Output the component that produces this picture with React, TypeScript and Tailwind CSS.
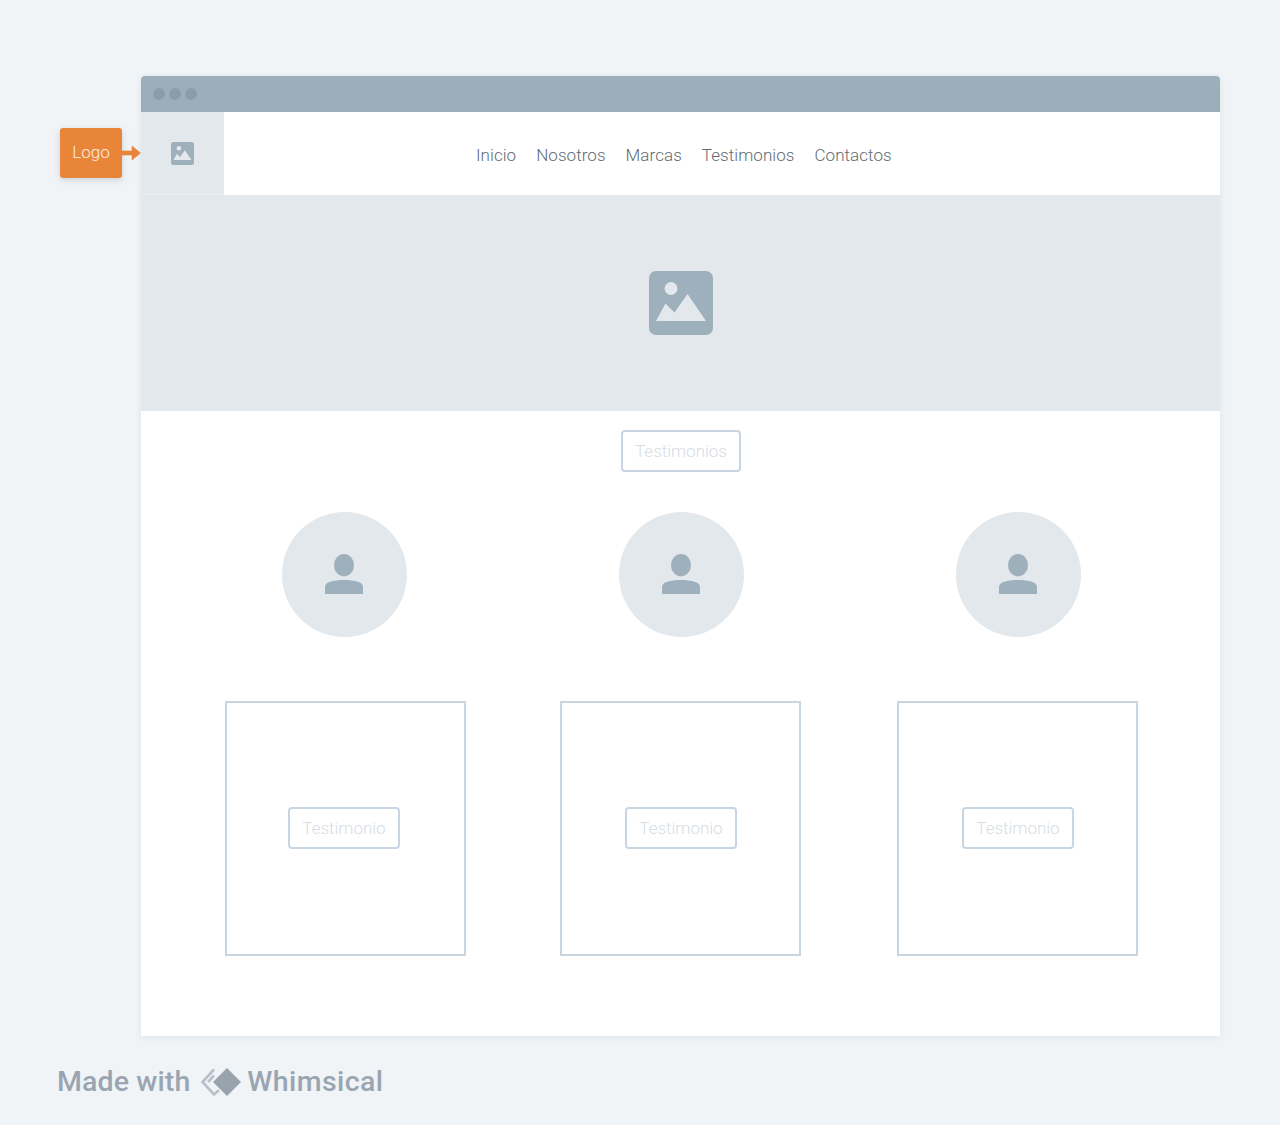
function ImageIcon({ className }: { className: string }) {
  return (
    <svg viewBox="0 0 64 64" className={className}>
      <rect width="64" height="64" rx="7" fill="#9fb0bd" />
      <circle cx="22" cy="17.5" r="6.4" fill="#e3e8ec" />
      <path d="M7 50 L16.5 32.5 L25.5 41.5 L38.5 23 L57 50 Z" fill="#e3e8ec" />
    </svg>
  );
}

function UserIcon() {
  return (
    <svg viewBox="0 0 38 40" className="w-[38px] h-[40px] mr-[1px] mb-[2px]">
      <ellipse cx="19" cy="11.2" rx="10" ry="11.2" fill="#9fb0bd" />
      <path d="M0 40 V33 C0 28 8 26 19 26 C30 26 38 28 38 33 V40 Z" fill="#9fb0bd" />
    </svg>
  );
}

function WhimsicalLogo() {
  return (
    <svg viewBox="0 0 42 30" className="w-[42px] h-[30px]">
      <path d="M14 2.5 L2.5 15 L14 27.5 L19 23" fill="none" stroke="#b7bfc8" strokeWidth="2.6" />
      <path d="M8 15 L14 8.5" fill="none" stroke="#b7bfc8" strokeWidth="2.6" />
      <path d="M27 1 L41 15 L27 29 L13 15 Z" fill="#98a3ae" />
    </svg>
  );
}

function Label({ text, className }: { text: string; className: string }) {
  return (
    <div
      className={`flex items-center justify-center h-[42px] pt-[2px] bg-white border-2 border-[#c9d5e0] rounded-[4px] text-[#d6dde4] text-[17px] font-light ${className}`}
    >
      {text}
    </div>
  );
}

const navItems = ["Inicio", "Nosotros", "Marcas", "Testimonios", "Contactos"];

const cards = [
  { margin: "", offset: "mr-[3px] mb-[2px]" },
  { margin: "ml-[94px]", offset: "ml-[1px] mb-[2px]" },
  { margin: "ml-[96px]", offset: "ml-[1px] mb-[2px]" },
];

export default function App() {
  return (
    <div className="min-h-[1125px] bg-[#f0f4f7] pt-[76px] font-['Roboto',sans-serif] overflow-hidden">
      <div className="relative ml-[141px] w-[1079px] h-[960px] bg-white rounded-t-[4px] shadow-[0_1px_6px_rgba(90,110,130,0.12)]">
        <div className="flex items-center gap-1 h-9 pl-3 pb-[1px] bg-[#9daebb] rounded-t-[4px]">
          <span className="w-3 h-3 rounded-full bg-[#8b9dab]" />
          <span className="w-3 h-3 rounded-full bg-[#8b9dab]" />
          <span className="w-3 h-3 rounded-full bg-[#8b9dab]" />
        </div>

        <header className="flex h-[83px]">
          <div className="flex items-center justify-center w-[83px] bg-[#e3e8ec] border-b border-[#ebeff2]">
            <ImageIcon className="w-[23px] h-[23px]" />
          </div>
          <nav className="flex items-center gap-5 pl-[252px] pt-1 text-[#616b74] text-[17px] font-light tracking-[0.06px]">
            {navItems.map((item) => (
              <span key={item}>{item}</span>
            ))}
          </nav>
        </header>

        {/* annotation that sits outside the browser frame */}
        <div className="absolute left-[-81px] top-[52px] flex items-center">
          <div className="flex items-center justify-center w-[62px] h-[50px] bg-[#e98539] rounded-[3px] text-[#fdeee2] text-[17px] font-light shadow-[0_2px_6px_rgba(90,110,130,0.25)]">
            Logo
          </div>
          <svg viewBox="0 0 19 16" className="w-[19px] h-[16px]">
            <path d="M0 6 H10 V1 L18.5 8 L10 15 V10 H0 Z" fill="#e98539" stroke="#e98539" strokeWidth="0.6" strokeLinejoin="round" />
          </svg>
        </div>

        <section className="flex items-center justify-center h-[216px] bg-[#e3e8ec]">
          <ImageIcon className="w-[64px] h-[64px] mb-[1px]" />
        </section>

        <div className="flex justify-center pt-[19px] pl-[1px]">
          <Label text="Testimonios" className="w-[120px]" />
        </div>

        <div className="flex gap-[212px] pl-[140.5px] pt-[40px]">
          {[0, 1, 2].map((i) => (
            <div key={i} className="flex items-center justify-center w-[125px] h-[125px] rounded-full bg-[#e3e8ec]">
              <UserIcon />
            </div>
          ))}
        </div>

        <div className="flex pl-[84px] pt-[64px]">
          {cards.map((card, i) => (
            <div
              key={i}
              className={`flex items-center justify-center w-[241px] h-[255px] border-2 border-[#c9d5e0] ${card.margin}`}
            >
              <Label text="Testimonio" className={`w-[112px] ${card.offset}`} />
            </div>
          ))}
        </div>
      </div>

      <footer className="flex items-center h-[30px] ml-[57px] mt-[31px] text-[#9aa5b1] text-[28.5px] font-medium leading-none">
        <span className="tracking-[0.1px]">Made with</span>
        <span className="ml-[10px] mr-[5px]">
          <WhimsicalLogo />
        </span>
        <span className="tracking-[0.4px]">Whimsical</span>
      </footer>
    </div>
  );
}
